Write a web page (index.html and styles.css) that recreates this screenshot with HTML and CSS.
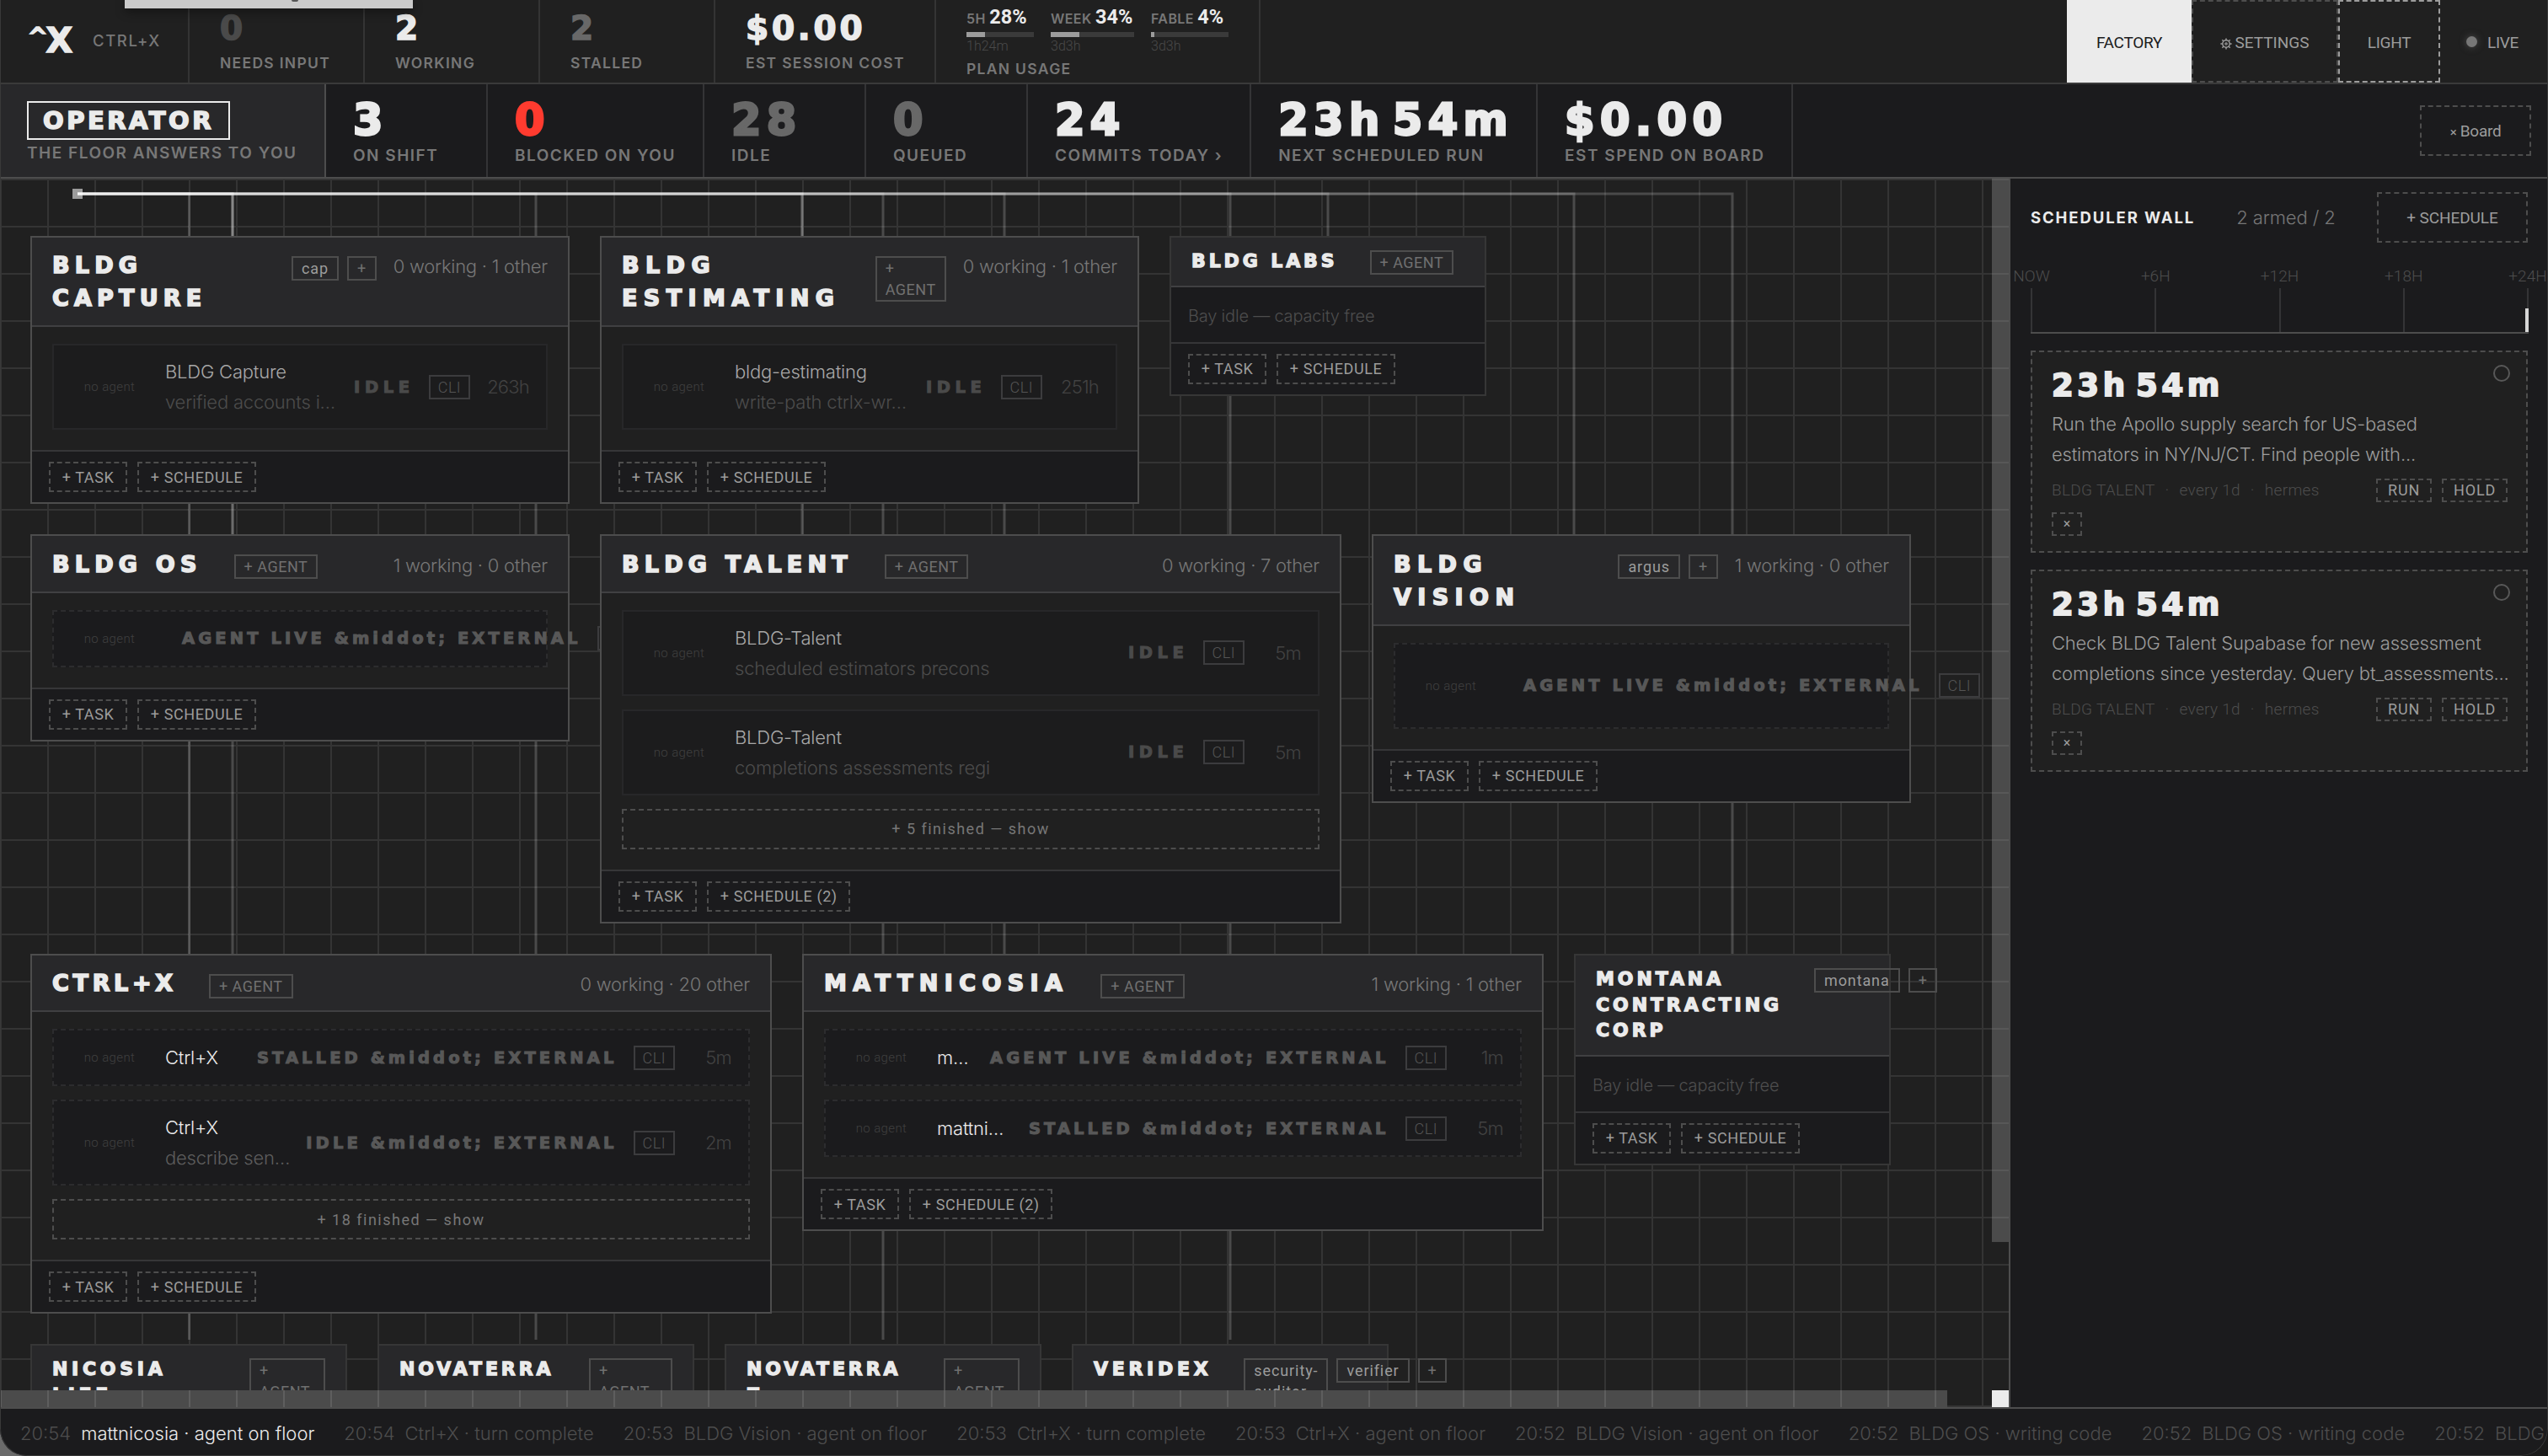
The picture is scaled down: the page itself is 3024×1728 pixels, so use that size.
FILE: index.html
```html
<!DOCTYPE html>
<html lang="en">

<head>
    <meta charset="UTF-8">
    <meta name="viewport" content="width=device-width, initial-scale=1.0">
    <title>CTRL+X</title>
    <link rel="stylesheet" href="styles.css">
</head>

<body>
    <div class="app">
        <!-- Top bar -->
        <header class="topbar">
            <div class="brand">
                <span class="logo"><sup>^</sup>X</span>
                <span class="brand-name">CTRL+X</span>
            </div>
            <div class="stat"><b class="faint">0</b><span>NEEDS INPUT</span></div>
            <div class="stat"><b>2</b><span>WORKING</span></div>
            <div class="stat"><b class="dim">2</b><span>STALLED</span></div>
            <div class="stat stat-cost"><b>$0.00</b><span>EST SESSION COST</span></div>
            <div class="stat usage">
                <div class="meters">
                    <div class="meter meter-5h">
                        <p>5H <strong>28%</strong></p>
                        <div class="bar"><i style="width: 28%"></i></div>
                        <small>1h24m</small>
                    </div>
                    <div class="meter meter-week">
                        <p>WEEK <strong>34%</strong></p>
                        <div class="bar"><i style="width: 34%"></i></div>
                        <small>3d3h</small>
                    </div>
                    <div class="meter meter-fable">
                        <p>FABLE <strong>4%</strong></p>
                        <div class="bar"><i style="width: 4%"></i></div>
                        <small>3d3h</small>
                    </div>
                </div>
                <span>PLAN USAGE</span>
            </div>
            <nav class="actions">
                <button class="factory">FACTORY</button>
                <button class="settings">
                    <svg width="14" height="14" viewBox="0 0 14 14" fill="none" stroke="currentColor">
                        <circle cx="7" cy="7" r="4.2" stroke-width="1.5" />
                        <circle cx="7" cy="7" r="1.2" stroke-width="1.2" />
                        <path d="M7 .4v2M7 11.6v2M.4 7h2M11.6 7h2M2.3 2.3l1.5 1.5M10.2 10.2l1.5 1.5M2.3 11.7l1.5-1.5M10.2 3.8l1.5-1.5" stroke-width="1.5" />
                    </svg>SETTINGS
                </button>
                <button class="light">LIGHT</button>
                <span class="live"><i></i>LIVE</span>
            </nav>
        </header>

        <!-- Operator bar -->
        <section class="floorbar">
            <div class="operator">
                <h1>OPERATOR</h1>
                <span>THE FLOOR ANSWERS TO YOU</span>
            </div>
            <div class="kpi"><b>3</b><span>ON SHIFT</span></div>
            <div class="kpi"><b class="alert">0</b><span>BLOCKED ON YOU</span></div>
            <div class="kpi"><b class="dim">28</b><span>IDLE</span></div>
            <div class="kpi"><b class="dim">0</b><span>QUEUED</span></div>
            <div class="kpi"><b>24</b><span>COMMITS TODAY ›</span></div>
            <div class="kpi"><b>23h 54m</b><span>NEXT SCHEDULED RUN</span></div>
            <div class="kpi"><b>$0.00</b><span>EST SPEND ON BOARD</span></div>
            <button class="board-btn"><em>×</em> Board</button>
        </section>

        <main>
            <div class="floor">
                <!-- Conveyor lines from the operator to each bay -->
                <svg class="wires" width="2384" height="1458" fill="none">
                    <rect x="86" y="12" width="12" height="12" />
                    <path d="M92 18H276V70" />
                    <path d="M92 18H276V424" />
                    <path d="M92 18H276V922" />
                    <path d="M92 18H952V70" />
                    <path d="M92 18H952V424" />
                    <path d="M92 18H1192V922" />
                    <path d="M92 18H1576V70" />
                    <path d="M92 18H1868V424" />
                    <path d="M92 18H2056V922" />
                    <path d="M92 18H224.500V1378" />
                    <path d="M92 18H636V1378" />
                    <path d="M92 18H1048V1378" />
                    <path d="M92 18H1460V1378" />
                </svg>

                <div class="bays">
                    <div class="bay-row">
                        <article class="bay w-m">
                            <div class="head">
                                <h3>BLDG<br>CAPTURE</h3>
                                <div class="chips end"><span class="chip on">cap</span><span class="chip">+</span></div>
                                <span class="count">0 working · 1 other</span>
                            </div>
                            <div class="body">
                                <div class="task idle">
                                    <span class="avatar">no agent</span>
                                    <div class="name">
                                        <p>BLDG Capture</p>
                                        <p class="desc">verified accounts i…</p>
                                    </div>
                                    <span class="status">IDLE</span><span class="cli">CLI</span><span class="age">263h</span>
                                </div>
                            </div>
                            <div class="foot"><button>+ TASK</button><button>+ SCHEDULE</button></div>
                        </article>

                        <article class="bay w-m">
                            <div class="head">
                                <h3 class="loose">BLDG<br>ESTIMATING</h3>
                                <div class="chips end"><span class="chip stack">+ AGENT</span></div>
                                <span class="count">0 working · 1 other</span>
                            </div>
                            <div class="body">
                                <div class="task idle">
                                    <span class="avatar">no agent</span>
                                    <div class="name">
                                        <p>bldg-estimating</p>
                                        <p class="desc">write-path ctrlx-wr…</p>
                                    </div>
                                    <span class="status">IDLE</span><span class="cli">CLI</span><span class="age">251h</span>
                                </div>
                            </div>
                            <div class="foot"><button>+ TASK</button><button>+ SCHEDULE</button></div>
                        </article>

                        <article class="bay w-s empty">
                            <div class="head">
                                <h3>BLDG LABS</h3>
                                <div class="chips"><span class="chip">+ AGENT</span></div>
                            </div>
                            <p class="vacant">Bay idle — capacity free</p>
                            <div class="foot"><button>+ TASK</button><button>+ SCHEDULE</button></div>
                        </article>
                    </div>

                    <div class="bay-row">
                        <article class="bay w-m">
                            <div class="head">
                                <h3>BLDG OS</h3>
                                <div class="chips"><span class="chip">+ AGENT</span></div>
                                <span class="count">1 working · 0 other</span>
                            </div>
                            <div class="body">
                                <div class="task">
                                    <span class="avatar">no agent</span>
                                    <div class="name"></div>
                                    <span class="status">AGENT LIVE &amp;middot; EXTERNAL</span><span class="cli">CLI</span>
                                </div>
                            </div>
                            <div class="foot"><button>+ TASK</button><button>+ SCHEDULE</button></div>
                        </article>

                        <article class="bay w-l">
                            <div class="head">
                                <h3>BLDG TALENT</h3>
                                <div class="chips"><span class="chip">+ AGENT</span></div>
                                <span class="count">0 working · 7 other</span>
                            </div>
                            <div class="body">
                                <div class="task idle">
                                    <span class="avatar">no agent</span>
                                    <div class="name">
                                        <p>BLDG-Talent</p>
                                        <p class="desc">scheduled estimators precons</p>
                                    </div>
                                    <span class="status">IDLE</span><span class="cli">CLI</span><span class="age">5m</span>
                                </div>
                                <div class="task idle">
                                    <span class="avatar">no agent</span>
                                    <div class="name">
                                        <p>BLDG-Talent</p>
                                        <p class="desc">completions assessments regi</p>
                                    </div>
                                    <span class="status">IDLE</span><span class="cli">CLI</span><span class="age">5m</span>
                                </div>
                                <button class="more">+ 5 finished — show</button>
                            </div>
                            <div class="foot"><button>+ TASK</button><button>+ SCHEDULE (2)</button></div>
                        </article>

                        <article class="bay w-m">
                            <div class="head">
                                <h3 class="loose">BLDG<br>VISION</h3>
                                <div class="chips end"><span class="chip on">argus</span><span class="chip">+</span></div>
                                <span class="count">1 working · 0 other</span>
                            </div>
                            <div class="body">
                                <div class="task tall">
                                    <span class="avatar">no agent</span>
                                    <div class="name"></div>
                                    <span class="status">AGENT LIVE &amp;middot; EXTERNAL</span><span class="cli">CLI</span>
                                </div>
                            </div>
                            <div class="foot"><button>+ TASK</button><button>+ SCHEDULE</button></div>
                        </article>
                    </div>

                    <div class="bay-row">
                        <article class="bay w-l">
                            <div class="head">
                                <h3 class="tight">CTRL+X</h3>
                                <div class="chips"><span class="chip">+ AGENT</span></div>
                                <span class="count">0 working · 20 other</span>
                            </div>
                            <div class="body">
                                <div class="task">
                                    <span class="avatar">no agent</span>
                                    <div class="name">
                                        <p>Ctrl+X</p>
                                    </div>
                                    <span class="status">STALLED &amp;middot; EXTERNAL</span><span class="cli">CLI</span><span class="age">5m</span>
                                </div>
                                <div class="task">
                                    <span class="avatar">no agent</span>
                                    <div class="name">
                                        <p>Ctrl+X</p>
                                        <p class="desc">describe sen…</p>
                                    </div>
                                    <span class="status">IDLE &amp;middot; EXTERNAL</span><span class="cli">CLI</span><span class="age">2m</span>
                                </div>
                                <button class="more">+ 18 finished — show</button>
                            </div>
                            <div class="foot"><button>+ TASK</button><button>+ SCHEDULE</button></div>
                        </article>

                        <article class="bay w-l">
                            <div class="head">
                                <h3 class="loose">MATTNICOSIA</h3>
                                <div class="chips"><span class="chip">+ AGENT</span></div>
                                <span class="count">1 working · 1 other</span>
                            </div>
                            <div class="body">
                                <div class="task">
                                    <span class="avatar">no agent</span>
                                    <div class="name">
                                        <p>m…</p>
                                    </div>
                                    <span class="status">AGENT LIVE &amp;middot; EXTERNAL</span><span class="cli">CLI</span><span class="age">1m</span>
                                </div>
                                <div class="task">
                                    <span class="avatar">no agent</span>
                                    <div class="name">
                                        <p>mattni…</p>
                                    </div>
                                    <span class="status">STALLED &amp;middot; EXTERNAL</span><span class="cli">CLI</span><span class="age">5m</span>
                                </div>
                            </div>
                            <div class="foot"><button>+ TASK</button><button>+ SCHEDULE (2)</button></div>
                        </article>

                        <article class="bay w-s empty">
                            <div class="head">
                                <h3>MONTANA<br>CONTRACTING<br>CORP</h3>
                                <div class="chips"><span class="chip on">montana</span><span class="chip">+</span></div>
                            </div>
                            <p class="vacant">Bay idle — capacity free</p>
                            <div class="foot"><button>+ TASK</button><button>+ SCHEDULE</button></div>
                        </article>
                    </div>

                    <div class="bay-row">
                        <article class="bay w-s empty">
                            <div class="head">
                                <h3 class="loose">NICOSIA<br>LIFE</h3>
                                <div class="chips end"><span class="chip stack">+ AGENT</span></div>
                            </div>
                        </article>
                        <article class="bay w-s empty">
                            <div class="head">
                                <h3>NOVATERRA</h3>
                                <div class="chips end"><span class="chip stack wide">+ AGENT</span></div>
                            </div>
                        </article>
                        <article class="bay w-s empty">
                            <div class="head">
                                <h3>NOVATERRA<br>Z</h3>
                                <div class="chips end"><span class="chip stack">+ AGENT</span></div>
                            </div>
                        </article>
                        <article class="bay w-s empty">
                            <div class="head">
                                <h3 class="loose">VERIDEX</h3>
                                <div class="chips"><span class="chip on">security-<br>auditor</span><span class="chip on">verifier</span><span class="chip">+</span></div>
                            </div>
                        </article>
                    </div>
                </div>

                <div class="scroll-y"></div>
                <div class="scroll-x"></div>
                <div class="scroll-corner"></div>
            </div>

            <!-- Scheduler -->
            <aside class="scheduler">
                <div class="wall-head">
                    <h2>SCHEDULER WALL</h2>
                    <span>2 armed / 2</span>
                    <button>+ SCHEDULE</button>
                </div>
                <div class="ruler">
                    <div class="tick"><span>NOW</span></div>
                    <div class="tick"><span>+6H</span></div>
                    <div class="tick"><span>+12H</span></div>
                    <div class="tick"><span>+18H</span></div>
                    <div class="tick last"><span>+24H</span></div>
                </div>
                <div class="job">
                    <h4>23h 54m</h4>
                    <p>Run the Apollo supply search for US-based<br>estimators in NY/NJ/CT. Find people with...</p>
                    <div class="meta">
                        <span>BLDG TALENT</span><i>·</i><span>every 1d</span><i>·</i><span>hermes</span>
                        <div class="run"><button>RUN</button><button>HOLD</button></div>
                    </div>
                    <button class="remove">×</button>
                </div>
                <div class="job">
                    <h4>23h 54m</h4>
                    <p>Check BLDG Talent Supabase for new assessment<br>completions since yesterday. Query bt_assessments...</p>
                    <div class="meta">
                        <span>BLDG TALENT</span><i>·</i><span>every 1d</span><i>·</i><span>hermes</span>
                        <div class="run"><button>RUN</button><button>HOLD</button></div>
                    </div>
                    <button class="remove">×</button>
                </div>
            </aside>
        </main>

        <!-- Event ticker -->
        <footer class="ticker">
            <p class="now"><time>20:54</time>mattnicosia · agent on floor</p>
            <p><time>20:54</time>Ctrl+X · turn complete</p>
            <p><time>20:53</time>BLDG Vision · agent on floor</p>
            <p><time>20:53</time>Ctrl+X · turn complete</p>
            <p><time>20:53</time>Ctrl+X · agent on floor</p>
            <p><time>20:52</time>BLDG Vision · agent on floor</p>
            <p><time>20:52</time>BLDG OS · writing code</p>
            <p><time>20:52</time>BLDG OS · writing code</p>
            <p><time>20:52</time>BLDG OS · writing code</p>
        </footer>

        <div class="tooltip"></div>
    </div>
</body>

</html>
```
FILE: styles.css
```css
* {
    box-sizing: border-box;
    margin: 0;
    padding: 0;
}

body {
    background: linear-gradient(90deg, #6b6b6b 50%, #1a1a1a 50%);
    color: #ebebeb;
    font-family: Inter, "Liberation Sans", sans-serif;
    font-weight: 300;
    font-size: 22px;
    overflow: hidden;
}

button {
    background: none;
    border: 2px dashed #4d4d4d;
    color: #9c9c9c;
    font-family: Roboto, sans-serif;
    font-weight: 400;
    font-size: 18px;
    white-space: nowrap;
}

h1, h3, h4,
.logo,
.stat b,
.kpi b,
.status {
    font-family: "DejaVu Sans", sans-serif;
    font-weight: bold;
    -webkit-text-stroke: 1.6px currentColor;
}

.app {
    position: relative;
    width: 3024px;
    height: 1728px;
    display: flex;
    flex-direction: column;
    background: #1b1b1d;
    border-radius: 0 0 32px 32px;
    overflow: hidden;
}

/* window edge */
.app::after {
    content: "";
    position: absolute;
    inset: 0;
    border: 1px solid #393939;
    border-top: none;
    border-radius: 0 0 32px 32px;
}

/* Top bar */
.topbar {
    display: flex;
    height: 100px;
    flex: none;
    background: #202020;
    border-bottom: 2px solid #3a3a3a;
}

.brand {
    width: 225px;
    padding: 0 0 2px 33px;
    display: flex;
    align-items: center;
    border-right: 2px solid #343434;
}

.logo {
    font-size: 41px;
    line-height: 41px;
    letter-spacing: -2px;
    width: 77px;
}

.logo sup {
    font-size: 28px;
    line-height: 1px;
    vertical-align: 9px;
}

.brand-name {
    font-weight: 500;
    font-size: 18.5px;
    letter-spacing: 1.6px;
    color: #777;
}

.stat {
    min-width: 208px;
    padding: 15px 36px 0;
    border-right: 2px solid #343434;
    white-space: nowrap;
}

.stat-cost {
    width: 262px;
}

.stat b {
    display: block;
    font-size: 39px;
    line-height: 38px;
    letter-spacing: 3.8px;
}

.stat span {
    display: block;
    margin-top: 12px;
    font-weight: 600;
    font-size: 17.5px;
    line-height: 20px;
    letter-spacing: 1.3px;
    color: #777;
}

.stat .faint {
    color: #4a4a4a;
}

.stat .dim,
.kpi .dim {
    color: #686868;
}

.usage {
    width: 385px;
    padding-top: 8px;
}

.meters {
    display: flex;
    gap: 20px;
}

.meter-5h {
    width: 80px;
}

.meter-week {
    width: 99px;
}

.meter-fable {
    width: 92px;
}

.meter p {
    font-weight: 600;
    font-size: 16px;
    line-height: 24px;
    letter-spacing: .4px;
    color: #777;
    white-space: nowrap;
}

.meter strong {
    font-family: Roboto, sans-serif;
    font-weight: 700;
    font-size: 23.5px;
    letter-spacing: 0;
    color: #ebebeb;
}

.bar {
    height: 6px;
    margin-top: 4px;
    background: #3a3a3a;
}

.bar i {
    display: block;
    height: 6px;
    background: #9c9c9c;
}

.meter small {
    display: block;
    margin-top: 1px;
    font-family: Roboto, sans-serif;
    font-size: 16px;
    line-height: 20px;
    color: #4a4a4a;
}

.stat.usage > span {
    margin-top: 7px;
}

.actions {
    display: flex;
    margin-left: auto;
}

.actions button,
.live {
    font-family: Roboto, sans-serif;
    font-size: 19px;
    font-weight: 400;
    padding-top: 2px;
    letter-spacing: -.3px;
}

.actions .factory {
    width: 148px;
    background: #ebebeb;
    border: none;
    color: #1b1b1d;
}

.actions .settings {
    width: 174px;
    letter-spacing: 0;
}

.settings svg {
    margin-right: 3px;
    vertical-align: -2px;
}

.actions .light {
    width: 121px;
    border-color: #9c9c9c;
}

.live {
    width: 128px;
    padding-left: 31px;
    display: flex;
    align-items: center;
    color: #9c9c9c;
}

.live i {
    width: 13px;
    height: 13px;
    margin: -2px 12px 0 0;
    border-radius: 50%;
    background: #777;
    box-shadow: 0 0 8px #4d4d4d;
}

.tooltip {
    position: absolute;
    left: 148px;
    top: 0;
    width: 342px;
    height: 10px;
    background: #cacaca;
    box-shadow: 0 4px 12px rgba(0, 0, 0, .4);
}

.tooltip::after {
    content: "";
    position: absolute;
    left: 198px;
    top: 0;
    width: 8px;
    height: 2px;
    border-radius: 0 0 4px 4px;
    background: #555;
}

/* Operator bar */
.floorbar {
    display: flex;
    flex: none;
    height: 112px;
    border-bottom: 2px solid #4d4d4d;
}

.operator {
    width: 387px;
    padding: 20px 0 0 32px;
    background: #28282a;
    border-right: 2px solid #4d4d4d;
}

.operator h1 {
    width: 241px;
    height: 46px;
    padding-left: 17px;
    border: 2px solid #ebebeb;
    font-size: 29px;
    line-height: 42px;
    letter-spacing: 3.5px;
}

.operator span,
.kpi span {
    display: block;
    margin-top: 6px;
    font-weight: 600;
    font-size: 19px;
    line-height: 20px;
    letter-spacing: 1.5px;
    color: #777;
    white-space: nowrap;
}

.kpi {
    min-width: 192px;
    padding: 17px 32px 0;
    border-right: 2px solid #343436;
}

.kpi b {
    display: block;
    font-size: 51px;
    line-height: 51px;
    letter-spacing: 6.4px;
    word-spacing: -15px;
    margin-right: -5px;
    white-space: nowrap;
    -webkit-text-stroke-width: 2.8px;
}

.kpi span {
    margin-top: 7px;
}

.kpi .alert {
    color: #ff3b2f;
}

.board-btn {
    width: 132px;
    height: 60px;
    margin: 25px 20px 0 auto;
    font-size: 19px;
    letter-spacing: -.3px;
}

.board-btn em {
    font-style: normal;
    font-size: 15px;
}

/* Floor */
main {
    display: flex;
    height: 1458px;
    flex: none;
}

.floor {
    position: relative;
    flex: none;
    width: 2384px;
    overflow: hidden;
    background-color: #202020;
    background-image:
        linear-gradient(#343434 2px, transparent 2px),
        linear-gradient(90deg, #343434 2px, transparent 2px);
    background-size: 56px 56px;
}

.wires {
    position: absolute;
    left: 0;
    top: 0;
}

.wires path {
    stroke: #fff;
    stroke-opacity: .19;
    stroke-width: 3;
}

.wires rect {
    fill: #9c9c9c;
}

.bays {
    position: relative;
    padding: 68px 36px;
    display: flex;
    flex-direction: column;
    gap: 36px;
}

.bay-row {
    display: flex;
    align-items: flex-start;
    gap: 36px;
}

.bay {
    flex: none;
    background: #202020;
    border: 2px solid #4d4d4d;
}

.w-s {
    width: 376px;
}

.w-m {
    width: 640px;
}

.w-l {
    width: 880px;
}

.empty {
    background: #1b1b1d;
    border-color: #363636;
}

.head {
    display: flex;
    align-items: flex-start;
    padding: 13.2px 24px;
    background: #28282a;
    border-bottom: 2px solid #404042;
}

.head h3 {
    font-size: 27px;
    line-height: 39px;
    letter-spacing: 6.2px;
    white-space: nowrap;
}

.head .loose {
    letter-spacing: 7.4px;
}

.head .tight {
    letter-spacing: 4.7px;
}

.empty h3 {
    font-size: 22px;
    line-height: 30.7px;
    letter-spacing: 3.9px;
    -webkit-text-stroke-width: 1.3px;
}

.empty .head .loose {
    letter-spacing: 4.7px;
}

.chips {
    display: flex;
    align-items: flex-start;
    gap: 10px;
    margin: 8.8px 0 0 38px;
}

.chips.end {
    margin-left: auto;
}

.empty .chips {
    margin-top: 1.8px;
}

.chip {
    padding: 0 10px;
    border: 2px solid #4d4d4d;
    font-family: Roboto, sans-serif;
    font-weight: 400;
    font-size: 18px;
    line-height: 25px;
    letter-spacing: .5px;
    color: #707070;
    white-space: nowrap;
}

.chip.on {
    color: #9c9c9c;
    letter-spacing: .9px;
}

.chip.stack {
    width: 84px;
    white-space: normal;
}

.empty .chip.stack {
    width: 90px;
}

.empty .chip.wide {
    width: 99px;
}

.count {
    margin: 2px 0 -2px auto;
    line-height: 39px;
    letter-spacing: -.25px;
    color: #777;
    white-space: nowrap;
}

.chips.end + .count {
    margin-left: 20px;
}

.body {
    padding: 20px 24px 24px;
    display: flex;
    flex-direction: column;
    gap: 16px;
}

.task {
    display: flex;
    align-items: center;
    gap: 20px;
    min-height: 68px;
    padding: 15px 20px;
    background: #1b1b1d;
    border: 2px dashed #2c2c2e;
    white-space: nowrap;
}

.task.idle {
    background: #1c1c1d;
    border: 2px solid #272729;
}

.task.tall {
    min-height: 102px;
}

.avatar {
    width: 92px;
    flex: none;
    text-align: center;
    font-family: Roboto, sans-serif;
    font-size: 15px;
    letter-spacing: .4px;
    color: #404040;
}

.name {
    flex: 1;
    min-width: 0;
    display: flex;
    flex-direction: column;
    gap: 4px;
    letter-spacing: -.2px;
}

.name p {
    line-height: 32px;
}

.idle .name {
    color: #a8a8a8;
}

.name .desc {
    color: #5e5e5e;
}

.idle .desc {
    color: #4c4c4c;
}

.status {
    font-size: 19.5px;
    letter-spacing: 4.1px;
    color: #585858;
    margin-right: -1px;
    -webkit-text-stroke-width: 1.1px;
}

.idle .status {
    color: #4a4a4a;
    letter-spacing: 5.6px;
    margin-right: -3px;
}

.cli {
    padding: 0 9px;
    border: 2px solid #3c3c3e;
    font-family: Roboto, sans-serif;
    font-size: 18px;
    line-height: 25px;
    letter-spacing: .5px;
    color: #555;
}

.age {
    min-width: 47px;
    text-align: right;
    letter-spacing: -.8px;
    color: #424242;
}

.more {
    height: 48px;
    letter-spacing: 1.5px;
    color: #777;
}

.vacant {
    height: 64.4px;
    padding: 3px 20px 0;
    font-size: 20px;
    line-height: 62px;
    letter-spacing: -.2px;
    color: #4d4d4d;
}

.foot {
    display: flex;
    gap: 12px;
    height: 62px;
    padding: 12px 20px;
    background: #1b1b1d;
    border-top: 2px solid #363638;
}

.foot button {
    height: 36px;
    padding: 0 13.7px;
    letter-spacing: .6px;
}

/* Scrollbars */
.scroll-y,
.scroll-x,
.scroll-corner {
    position: absolute;
    background-color: #4b4b4b;
    background-size: 56px 56px;
}

.scroll-y {
    right: 0;
    top: 0;
    width: 20px;
    height: 1262px;
    background-image: linear-gradient(#585858 2px, transparent 2px);
}

.scroll-x {
    left: 0;
    bottom: 0;
    width: 2311px;
    height: 20px;
    background-image: linear-gradient(90deg, #5e5e5e 2px, transparent 2px);
}

.scroll-corner {
    right: 0;
    bottom: 0;
    width: 20px;
    height: 20px;
    background: #ebebeb;
}

/* Scheduler */
.scheduler {
    flex: 1;
    min-width: 0;
    padding: 16px 24px;
    border-left: 2px solid #4d4d4d;
}

.wall-head {
    display: flex;
    align-items: center;
    height: 60px;
}

.wall-head h2 {
    font-size: 18.5px;
    font-weight: 700;
    letter-spacing: 1.9px;
}

.wall-head span {
    margin-left: 49px;
    color: #777;
    letter-spacing: -.1px;
}

.wall-head button {
    width: 179px;
    height: 60px;
    margin-left: auto;
    font-size: 19px;
    letter-spacing: -.1px;
}

.ruler {
    display: flex;
    justify-content: space-between;
    height: 54px;
    margin: 54px -1px 20px 0;
    border-bottom: 2px solid #4d4d4d;
}

.tick {
    position: relative;
    width: 2px;
    background: #343436;
}

.tick span {
    position: absolute;
    left: 1px;
    top: -26px;
    transform: translateX(-50%);
    font-family: Roboto, sans-serif;
    font-size: 19px;
    line-height: 24px;
    color: #4d4d4d;
}

.tick.last::after {
    content: "";
    position: absolute;
    right: 0;
    bottom: 0;
    width: 4px;
    height: 28px;
    background: #d6d6d6;
}

.job {
    position: relative;
    height: 240px;
    margin-bottom: 20px;
    padding: 18px 23px;
    background: #202020;
    border: 2px dashed #4d4d4d;
}

.job::after {
    content: "";
    position: absolute;
    right: 19px;
    top: 15px;
    width: 16px;
    height: 16px;
    border: 2px solid #585858;
    border-radius: 50%;
}

.job h4 {
    font-size: 37px;
    line-height: 43px;
    letter-spacing: 4.6px;
    word-spacing: -9px;
    -webkit-text-stroke-width: 2px;
}

.job p {
    margin-top: 6px;
    line-height: 36.4px;
    letter-spacing: -.2px;
    color: #9c9c9c;
    white-space: nowrap;
}

.meta {
    display: flex;
    align-items: center;
    margin-top: 10px;
    height: 28px;
    font-family: Roboto, sans-serif;
    font-size: 19px;
    letter-spacing: .3px;
    color: #4d4d4d;
}

.meta i {
    width: 29px;
    text-align: center;
    font-style: normal;
}

.run {
    display: flex;
    gap: 12px;
    margin-left: auto;
    margin-right: -1px;
}

.run button {
    height: 28px;
    padding: 0 12px;
    line-height: 22px;
    letter-spacing: .8px;
}

.remove {
    width: 36px;
    height: 28px;
    margin-top: 12px;
    font-size: 16px;
    line-height: 22px;
}

/* Ticker */
.ticker {
    display: flex;
    gap: 35px;
    height: 58px;
    padding-left: 24px;
    border-top: 2px solid #4d4d4d;
    line-height: 59px;
    color: #4d4d4d;
    white-space: nowrap;
}

.ticker time {
    margin-right: 12px;
    color: #4d4d4d;
}

.ticker .now {
    color: #ebebeb;
}
```
